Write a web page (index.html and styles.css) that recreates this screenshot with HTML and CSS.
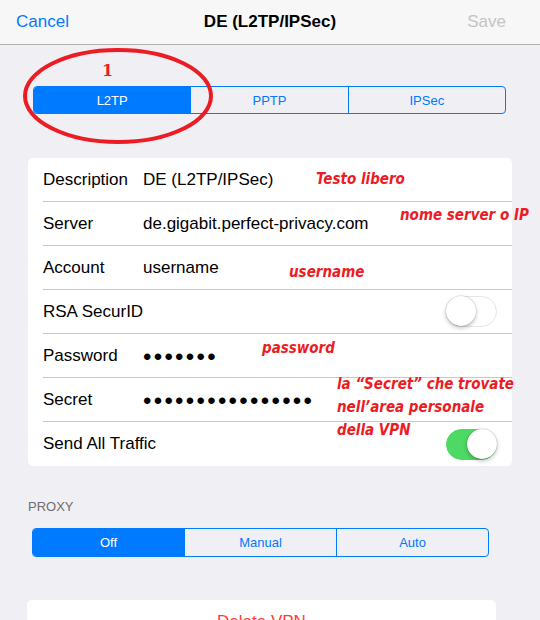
FILE: index.html
```html
<!DOCTYPE html>
<html lang="it">
<head>
  <meta charset="UTF-8">
  <meta name="viewport" content="width=device-width, initial-scale=1">
  <title>DE (L2TP/IPSec)</title>
  <link rel="stylesheet" href="styles.css">
</head>
<body>
  <header class="navbar">
    <button class="nav-btn cancel">Cancel</button>
    <h1 class="nav-title">DE (L2TP/IPSec)</h1>
    <button class="nav-btn save" disabled>Save</button>
  </header>

  <main class="page">
    <div class="type-wrap">
      <div class="segmented type">
        <button class="seg active">L2TP</button>
        <button class="seg">PPTP</button>
        <button class="seg">IPSec</button>
      </div>
      <svg class="circle-mark" width="192" height="98" viewBox="0 0 192 98">
        <ellipse cx="96" cy="49" rx="93" ry="46" fill="none" stroke="#ec1c24" stroke-width="4"/>
      </svg>
      <span class="note note-one">1</span>
    </div>

    <section class="card fields">
      <div class="row"><span class="label">Description</span><span class="value">DE (L2TP/IPSec)</span></div>
      <div class="row"><span class="label">Server</span><span class="value">de.gigabit.perfect-privacy.com</span></div>
      <div class="row"><span class="label">Account</span><span class="value">username</span></div>
      <div class="row"><span class="label">RSA SecurID</span><span class="switch"></span></div>
      <div class="row"><span class="label">Password</span><span class="value dots">•••••••</span></div>
      <div class="row"><span class="label">Secret</span><span class="value dots">••••••••••••••••</span></div>
      <div class="row"><span class="label">Send All Traffic</span><span class="switch on"></span></div>

      <span class="note n-desc">Testo libero</span>
      <span class="note n-server">nome server o IP</span>
      <span class="note n-user">username</span>
      <span class="note n-pass">password</span>
      <span class="note n-secret">la “Secret” che trovate<br>nell’area personale<br>della VPN</span>
    </section>

    <h2 class="group-title">PROXY</h2>
    <div class="segmented proxy">
      <button class="seg active">Off</button>
      <button class="seg">Manual</button>
      <button class="seg">Auto</button>
    </div>

    <section class="card delete">
      <button class="delete-btn">Delete VPN</button>
    </section>
  </main>
</body>
</html>
```

FILE: styles.css
```css
:root {
  --blue: #007aff;
  --bg: #efeff4;
  --card: #fff;
  --text: #000;
  --line: #c8c7cc;
  --note: #ec1c24;
}
* { box-sizing: border-box; margin: 0; padding: 0; }
html, body { height: 100%; overflow: hidden; }
body {
  background: var(--bg);
  font-family: 'Liberation Sans', Arial, sans-serif;
  color: var(--text);
}
button {
  font-family: inherit;
  background: none;
  border: none;
  cursor: pointer;
}

/* barra in alto */
.navbar {
  height: 45px;
  display: flex;
  align-items: center;
  justify-content: space-between;
  padding: 0 34px 0 16px;
  background: #f7f7f8;
  border-bottom: 1px solid #b2b2b2;
  position: relative;
}
.nav-btn { font-size: 17px; }
.cancel { color: var(--blue); }
.save { color: #c4c4c7; }
.nav-title {
  position: absolute;
  left: 0;
  right: 0;
  text-align: center;
  font-size: 17px;
  font-weight: bold;
  pointer-events: none;
}

/* controlli segmentati */
.segmented {
  display: flex;
  border: 1px solid var(--blue);
  border-radius: 4px;
  overflow: hidden;
}
.seg {
  flex: 1;
  font-size: 13px;
  color: var(--blue);
  border-left: 1px solid var(--blue);
}
.seg:first-child { border-left: none; }
.seg.active { background: var(--blue); color: #fff; }

.type-wrap {
  position: relative;
  padding: 41px 34px 0 33px;
}
.type { height: 28px; }
.proxy { height: 29px; margin: 0 51px 0 32px; }

/* scheda dei campi */
.card {
  background: var(--card);
  border-radius: 5px;
}
.fields {
  position: relative;
  margin: 44px 28px 0 28px;
  padding-left: 15px;
}
.row {
  height: 44px;
  display: flex;
  align-items: center;
  padding-right: 15px;
  border-bottom: 1px solid var(--line);
  font-size: 17px;
}
.row:last-of-type { border-bottom: none; }
.label { width: 100px; flex-shrink: 0; white-space: nowrap; }
.value { white-space: nowrap; }
.dots {
  font-size: 24px;
  letter-spacing: 2.3px;
  line-height: 1;
  padding-top: 2px;
}
.switch {
  margin-left: auto;
  width: 51px;
  height: 31px;
  border-radius: 16px;
  background: #fff;
  border: 1.5px solid #e5e5ea;
  position: relative;
}
.switch::after {
  content: '';
  position: absolute;
  top: -1px;
  left: -1px;
  width: 30px;
  height: 30px;
  border-radius: 50%;
  background: #fff;
  box-shadow: 0 2px 4px rgba(0,0,0,.25), 0 0 0 .5px rgba(0,0,0,.15);
}
.switch.on { background: #4cd964; border-color: #4cd964; }
.switch.on::after { left: auto; right: -1px; }

/* note scritte a mano */
.note {
  position: absolute;
  color: var(--note);
  font-family: 'DejaVu Sans Condensed', 'DejaVu Sans', sans-serif;
  font-style: italic;
  font-weight: bold;
  font-size: 15px;
  line-height: 22px;
  white-space: nowrap;
}
.circle-mark { position: absolute; left: 22px; top: 2px; }
.note-one {
  left: 102px;
  top: 15px;
  font-family: 'DejaVu Serif', serif;
  font-style: normal;
  font-size: 16px;
}
.n-desc { left: 288px; top: 10px; }
.n-server { left: 372px; top: 46px; }
.n-user { left: 261px; top: 103px; }
.n-pass { left: 234px; top: 179px; }
.n-secret { left: 309px; top: 215px; line-height: 23px; }

/* sezione proxy */
.group-title {
  font-size: 13px;
  font-weight: normal;
  color: #6d6d72;
  margin: 33px 0 13px 28px;
  line-height: 16px;
}

.delete {
  margin: 43px 44px 0 27px;
  height: 44px;
}
.delete-btn {
  width: 100%;
  height: 44px;
  font-size: 17px;
  color: #ff3b30;
}
```
